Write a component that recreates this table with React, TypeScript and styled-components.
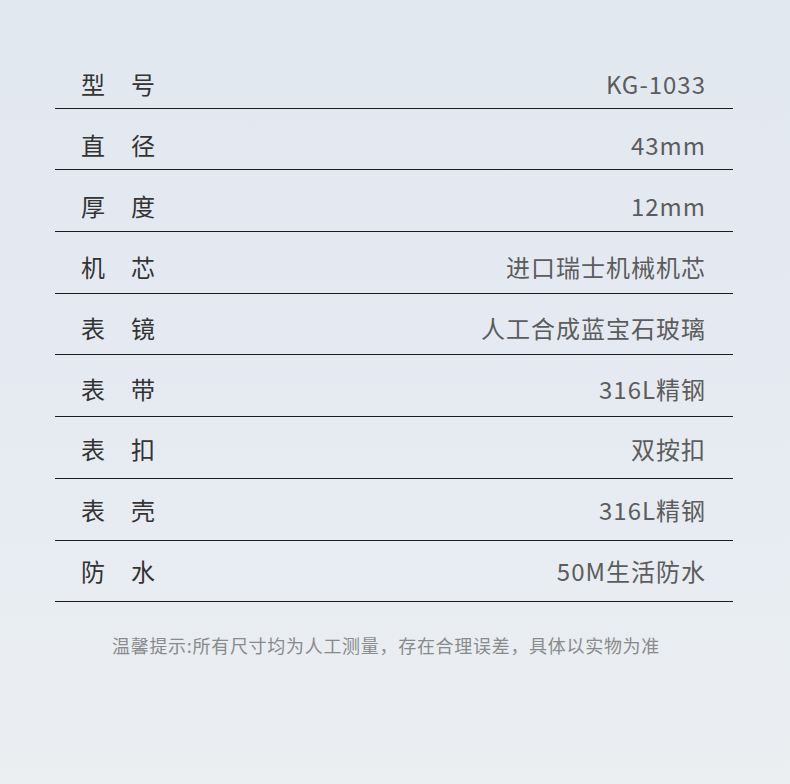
import { createGlobalStyle, styled } from "styled-components";

const GlobalStyle = createGlobalStyle`
  html, body {
    margin: 0;
    padding: 0;
  }
  body {
    font-family: "Noto Sans CJK SC", "Noto Sans", sans-serif;
  }
`;

const Page = styled.div`
  width: 790px;
  height: 784px;
  box-sizing: border-box;
  padding: 47px 57px 0 55px;
  background: linear-gradient(180deg, #e2e8f0 0%, #e5eaf2 45%, #ebeff2 100%);
  overflow: hidden;
`;

const Table = styled.div`
  display: flex;
  flex-direction: column;
`;

// text drifts up slightly relative to the rules row by row
const Row = styled.div<{ $lift: number }>`
  display: flex;
  align-items: center;
  justify-content: space-between;
  height: 61.7px;
  box-sizing: border-box;
  padding: ${(p) => 14 - p.$lift}px 28px 0 26px;
  border-bottom: 1px solid #1c1c1c;
`;

const Label = styled.span`
  font-size: 24px;
  line-height: 28px;
  color: #333333;
  letter-spacing: 26px;
`;

const Value = styled.span`
  font-size: 24px;
  line-height: 28px;
  color: #5c5c5c;
  letter-spacing: 1px;
  margin-right: -1px;
`;

const Note = styled.p`
  margin: 31px 0 0 57px;
  font-size: 18px;
  line-height: 24px;
  color: #8a8a8a;
  letter-spacing: 0.7px;
`;

const specs: [string, string][] = [
  ["型号", "KG-1033"],
  ["直径", "43mm"],
  ["厚度", "12mm"],
  ["机芯", "进口瑞士机械机芯"],
  ["表镜", "人工合成蓝宝石玻璃"],
  ["表带", "316L精钢"],
  ["表扣", "双按扣"],
  ["表壳", "316L精钢"],
  ["防水", "50M生活防水"],
];

export default function App() {
  return (
    <>
      <GlobalStyle />
      <Page>
        <Table>
          {specs.map(([label, value], i) => (
            <Row key={label} $lift={i * 1.7}>
              <Label>{label}</Label>
              <Value>{value}</Value>
            </Row>
          ))}
        </Table>
        <Note>温馨提示:所有尺寸均为人工测量，存在合理误差，具体以实物为准</Note>
      </Page>
    </>
  );
}
